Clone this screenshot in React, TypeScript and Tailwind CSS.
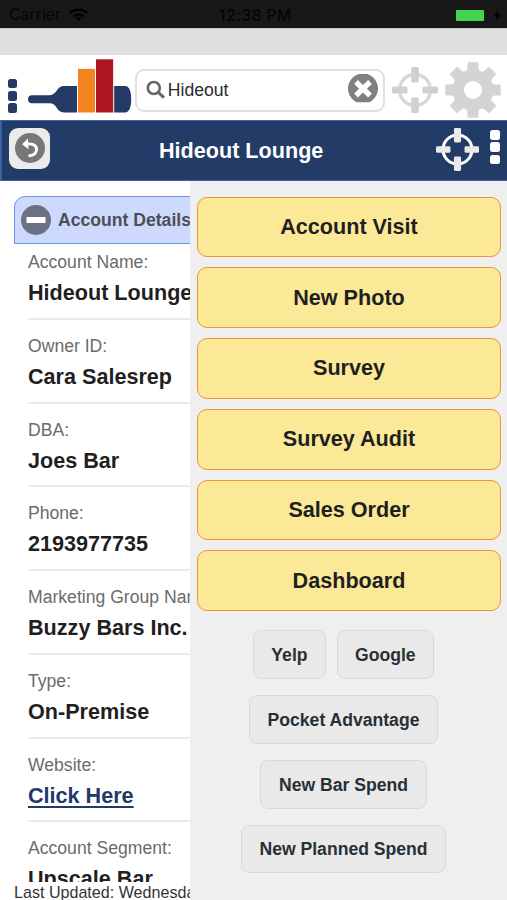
import { useState } from "react";

const FIELDS = [
  { label: "Account Name:", value: "Hideout Lounge" },
  { label: "Owner ID:", value: "Cara Salesrep" },
  { label: "DBA:", value: "Joes Bar" },
  { label: "Phone:", value: "2193977735" },
  { label: "Marketing Group Name:", value: "Buzzy Bars Inc." },
  { label: "Type:", value: "On-Premise" },
  { label: "Website:", value: "Click Here", link: true },
  { label: "Account Segment:", value: "Upscale Bar" },
];

const ACTIONS = ["Account Visit", "New Photo", "Survey", "Survey Audit", "Sales Order", "Dashboard"];

const LINKS = [["Yelp", "Google"], ["Pocket Advantage"], ["New Bar Spend"], ["New Planned Spend"]];

function Wifi() {
  return (
    <svg width="19" height="14" viewBox="0 0 19 14" fill="none" stroke="#000" strokeWidth="2.4">
      <path d="M1 5.2a12 12 0 0 1 17 0" />
      <path d="M4.3 8.6a7.4 7.4 0 0 1 10.4 0" />
      <path d="M9.5 13.2l-2.6-2.8a3.7 3.7 0 0 1 5.2 0z" fill="#000" stroke="none" />
    </svg>
  );
}

function Logo() {
  return (
    <svg width="105" height="55" viewBox="0 0 105 55">
      <path
        d="M5 36.200H22c3.500 0 5.500-1.500 7.500-4.200C31.800 28.800 33.500 27 37.500 27H98c4.500 0 6.200 5.500 6.200 13.200S102.500 53.500 98 53.500H38c-4 0-6-1.300-8-4.300-2-3.200-4-5-7.500-5H5a4 4 0 0 1 0-8z"
        fill="#253a66"
      />
      <rect x="50.500" y="9.300" width="18" height="44.700" fill="#f58220" stroke="#fff" />
      <rect x="68.500" y="-.2" width="18.200" height="54.200" fill="#b01524" stroke="#fff" />
    </svg>
  );
}

function Target({ size, color, tick }: { size: number; color: string; tick: string }) {
  return (
    <svg width={size} height={size} viewBox="0 0 46 46">
      <circle cx="23" cy="23" r="15.500" fill="none" stroke={color} strokeWidth="3.300" />
      <g fill={tick}>
        <rect x="19.200" y="0" width="7.600" height="15.500" rx="1.500" />
        <rect x="19.200" y="30.500" width="7.600" height="15.500" rx="1.500" />
        <rect x="0" y="19.600" width="15.500" height="7" rx="1.500" />
        <rect x="30.500" y="19.600" width="15.500" height="7" rx="1.500" />
      </g>
    </svg>
  );
}

function Gear() {
  return (
    <svg width="56" height="56" viewBox="-28 -28 56 56" fill="#d4d4d4">
      <circle r="14.700" fill="none" stroke="#d4d4d4" strokeWidth="11.400" />
      {[0, 45, 90, 135, 180, 225, 270, 315].map((deg) => (
        <path key={deg} transform={`rotate(${deg})`} d="M-7.500-18q1.800-1 1.900-4l.2-4.800q0-1 1-1h8.800q1 0 1 1l.2 4.800q.1 3 1.900 4z" />
      ))}
    </svg>
  );
}

function Dots({ className }: { className: string }) {
  return (
    <div className="flex flex-col gap-[2.500px]">
      {[0, 1, 2].map((i) => (
        <span key={i} className={`rounded-[2.5px] ${className}`} />
      ))}
    </div>
  );
}

export default function App() {
  const [query, setQuery] = useState("Hideout");

  return (
    <div
      className="flex h-[900px] w-[507px] flex-col overflow-hidden bg-white text-[#1f1f1f]"
      style={{ fontFamily: '"Liberation Sans", Arial, sans-serif' }}
    >
      {/* Status bar */}
      <div className="relative flex h-7 shrink-0 items-center bg-[#181818] pl-[9px] pt-[2px] text-[17px] leading-none text-[#050505]">
        <span className="w-[52px] font-[Inter] text-[15.9px]">Carrier</span>
        <span className="ml-2"><Wifi /></span>
        <span className="absolute left-[219px] top-[7px] font-[Inter] text-[16px] font-medium tracking-[0.3px]">12:38 PM</span>
        <span className="ml-auto h-[11px] w-[28px] rounded-[1px] bg-[#43d551]" />
        <svg className="ml-[10px] mr-[6px]" width="7" height="11" viewBox="0 0 8 12">
          <path d="M5 0L0 7h3.500L2.500 12 8 5H4.500z" />
        </svg>
      </div>
      <div className="h-[26.500px] shrink-0 border-t border-[#c9c9c9] bg-[#dfdfdf]" />

      {/* Search bar */}
      <div className="flex h-[65px] shrink-0 items-start pl-[7.500px]">
        <div className="pt-[24px]"><Dots className="size-[9.800px] bg-[#253a66]" /></div>
        <div className="ml-[10px] pt-[4px]"><Logo /></div>
        <div className="ml-[3px] mt-[14px] flex h-[43px] w-[250px] items-center rounded-[9px] border-2 border-[#e0e0e0] pl-[9px] pr-[5.500px]">
          <svg width="20" height="20" viewBox="0 0 20 20" fill="none" stroke="#666" strokeWidth="2.600">
            <circle cx="7.800" cy="8" r="6" />
            <path d="M12 12.200l6 5.500" strokeWidth="3" />
          </svg>
          <input
            className="ml-[1.500px] w-0 flex-1 bg-transparent pt-px text-[17.600px] text-[#2b2b2b] outline-none"
            value={query}
            onChange={(e) => setQuery(e.target.value)}
          />
          <button className="-mt-[3px]" onClick={() => setQuery("")}>
            <svg width="30" height="29" viewBox="0 0 30 29">
              <path d="M9 28.200a15 15 0 1 1 12 0z" fill="#808080" />
              <path d="M8 8l14 13.500m0-13.500L8 21.500" stroke="#fff" strokeWidth="5.300" />
            </svg>
          </button>
        </div>
        <div className="ml-[7px] mt-[12.500px]"><Target size={46} color="#d8d8d8" tick="#d0d0d0" /></div>
        <div className="ml-[7px] mt-[7.500px]"><Gear /></div>
      </div>

      {/* Title bar */}
      <header className="flex h-[61.500px] shrink-0 items-start border-y border-l-2 border-[#3b61a8] bg-[#233b67] pl-[7px] pt-[7px]">
        <button className="flex size-[41px] items-center justify-center rounded-[9px] bg-[#ebebeb]">
          <svg width="30" height="30" viewBox="0 0 30 30">
            <circle cx="15" cy="15" r="15" fill="#777" />
            <path d="M12 11c6-.5 9.500 1.200 9.500 5.200 0 3.600-3 6-6.800 6.600" fill="none" stroke="#fff" strokeWidth="2.900" strokeLinecap="round" />
            <path d="M7 11.200l6-5.700.5 10.800z" fill="#fff" />
          </svg>
        </button>
        <h1 className="ml-[109px] mt-[10px] w-[170px] text-[21.600px] font-bold leading-[25px] text-white">Hideout Lounge</h1>
        <div className="ml-[107px]"><Target size={43} color="#fff" tick="#e9e9e9" /></div>
        <div className="ml-[11px] mt-[2.500px]"><Dots className="size-[9.800px] bg-white" /></div>
      </header>

      <main className="flex min-h-0 flex-1">
        {/* Account details */}
        <section className="flex w-[190px] shrink-0 flex-col overflow-hidden pl-[14px] pt-[15px]">
          <div className="flex h-[48px] w-[480px] shrink-0 items-center rounded-t-[11px] border-[1.500px] border-[#619ae6] bg-[#cdd9fd] pl-[6px] text-[17.600px] font-bold text-[#4c5055]">
            <svg width="30" height="30" viewBox="0 0 30 30">
              <circle cx="15" cy="15" r="15" fill="#6a7185" />
              <rect x="5.500" y="12" width="19" height="6" fill="#fff" />
            </svg>
            <span className="ml-[7px] pt-px">Account Details</span>
          </div>
          <div className="-mt-2 min-h-0 w-[480px] flex-1 overflow-hidden pl-[14px]">
            {FIELDS.map((f) => (
              <div key={f.label} className="h-[83.750px] border-b-2 border-[#ebebeb] pt-[16px]">
                <div className="text-[17.600px] leading-[20px] text-[#6b6b6b]">{f.label}</div>
                <div className="mt-[8px] text-[21.600px] font-bold leading-[25px]">
                  {f.link ? (
                    <a className="text-[#213a6b] underline decoration-[1.500px] underline-offset-[3px]" href="#">{f.value}</a>
                  ) : (
                    f.value
                  )}
                </div>
              </div>
            ))}
          </div>
          <footer className="h-[18.500px] shrink-0 whitespace-nowrap text-[16.100px] leading-[21px] text-[#333]">
            Last Updated: Wednesday
          </footer>
        </section>

        {/* Slide-out actions */}
        <aside className="flex flex-1 flex-col bg-[#efefef] pl-[7px] pr-[6px] pt-[15.500px]">
          <div className="flex flex-col gap-[10px]">
            {ACTIONS.map((a) => (
              <button
                key={a}
                className="h-[60.800px] rounded-[10px] border-[1.500px] border-[#ee9338] bg-[#fbe998] text-[21.600px] font-bold"
              >
                {a}
              </button>
            ))}
          </div>
          <div className="mr-[11px] mt-[19px] flex flex-col gap-[16px]">
            {LINKS.map((row) => (
              <div key={row[0]} className="flex justify-center gap-[10.500px]">
                {row.map((l) => (
                  <button
                    key={l}
                    className="h-[48.800px] rounded-[8px] border-[1.500px] border-[#d9d9d9] bg-[#e9e9e9] px-[17.500px] pt-px text-[17.600px] font-bold text-[#263036]"
                  >
                    {l}
                  </button>
                ))}
              </div>
            ))}
          </div>
        </aside>
      </main>
    </div>
  );
}
